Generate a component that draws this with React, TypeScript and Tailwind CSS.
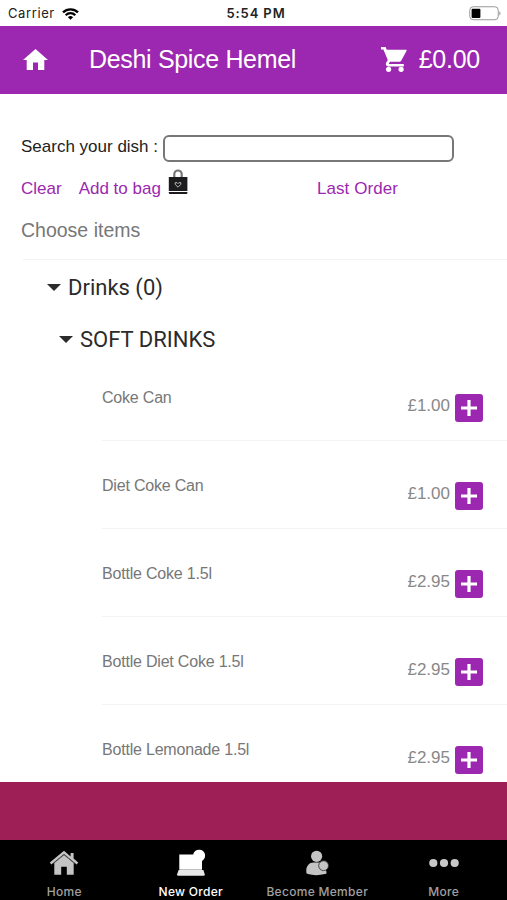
import { useState } from 'react';

const ITEMS = [
  { id: 'coke', name: 'Coke Can', price: 1 },
  { id: 'diet-coke', name: 'Diet Coke Can', price: 1 },
  { id: 'bottle-coke', name: 'Bottle Coke 1.5l', price: 2.95 },
  { id: 'bottle-diet-coke', name: 'Bottle Diet Coke 1.5l', price: 2.95 },
  { id: 'bottle-lemonade', name: 'Bottle Lemonade 1.5l', price: 2.95 },
];

function StatusBar() {
  return (
    <div className="h-[26px] shrink-0 grid grid-cols-3 items-center pl-2 pr-[6px] pt-px font-['Inter','Liberation_Sans',sans-serif] text-[13px] text-[#222]">
      <div className="flex items-center gap-[7px]">
        <span className="tracking-[0.6px]">Carrier</span>
        <svg className="w-[17px] h-3" viewBox="0 0 17 12" fill="none" stroke="#000" strokeWidth="2.3">
          <path d="M1 4.4a10.6 10.6 0 0 1 15 0" />
          <path d="M3.7 7.2a6.8 6.8 0 0 1 9.6 0" />
          <path d="M8.5 11.8 5.9 9.2a3.7 3.7 0 0 1 5.2 0z" fill="#000" stroke="none" />
        </svg>
      </div>
      <span className="ml-[3px] text-center font-semibold tracking-[0.9px] whitespace-nowrap">5:54 PM</span>
      <svg className="w-8 h-[15px] justify-self-end" viewBox="0 0 32 15">
        <rect x="0.75" y="0.75" width="28.5" height="13" rx="3.5" fill="#fff" stroke="#999" />
        <rect x="2.6" y="2.7" width="8.8" height="9.2" rx="1" fill="#000" />
        <path d="M30.3 5.2c1.6.6 1.6 3.7 0 4.3z" fill="#999" />
      </svg>
    </div>
  );
}

function HomeIcon({ className }: { className?: string }) {
  return (
    <svg className={className} viewBox="0 0 25 21" fill="#fff">
      <path d="M12.5 0 25 11h-3.7v10H15v-7.5h-5V21H3.7V11H0z" />
    </svg>
  );
}

function CartIcon({ className }: { className?: string }) {
  return (
    <svg className={className} viewBox="0 0 26 25" fill="#fff">
      <path d="M0 0h4.6l1.2 2.7H25c.6 0 .9.5.6 1l-5.3 9.7c-.5.9-1.2 1.4-2.2 1.4H9l-1.2 1.6c-.1.3 0 .5.3.5h14.7v2.5H7.2c-1.9 0-3-1.9-2.1-3.6l1.7-2.7L2.4 2.5H0z" />
      <circle cx="7.6" cy="22.3" r="2.6" />
      <circle cx="20.1" cy="22.3" r="2.6" />
    </svg>
  );
}

function Caret() {
  return (
    <svg className="w-[14px] h-[7px]" viewBox="0 0 14 7" fill="#2b2b2b">
      <path d="M0 0h14L7 7z" />
    </svg>
  );
}

function BagIcon() {
  return (
    <svg className="w-5 h-[26px]" viewBox="0 0 20 26">
      <path d="M6.3 9V5.2a3.7 3.7 0 0 1 7.4 0V9" fill="none" stroke="#777" strokeWidth="2.2" />
      <path d="M.8 8h18.6v14H.8z" fill="#1c1c1e" />
      <path d="M.8 22.9h18.6v1a1 1 0 0 1-1 1H1.8a1 1 0 0 1-1-1z" fill="#1c1c1e" />
      <path d="M10 18.2 7.2 15.4v-1.7h1.9l.9.9.9-.9h1.9v1.7z" fill="none" stroke="#bbb" strokeWidth="1" />
    </svg>
  );
}

function HomeTabIcon() {
  return (
    <svg className="w-[30px] h-[26px]" viewBox="0 0 30 26" fill="#c4c4c4">
      <path d="M5.3 13 15 5l9.7 8v11.8h-6.9v-8h-5.6v8H5.3z" />
      <path d="M15 .8 .8 12.6l1.5 1.9L15 4.1l12.7 10.4 1.5-1.9-4.6-4V3h-3v3.4z" />
      <path d="M4.5 13.4 15 4.8l10.5 8.6" fill="none" stroke="#777" strokeWidth="0.6" />
    </svg>
  );
}

function OrderTabIcon() {
  return (
    <svg className="w-[30px] h-[28px]" viewBox="0 0 30 28" fill="#fff">
      <path d="M3.3 5.5h13.9a6 6 0 1 1 8.8 6.4v8.9H3.3z" />
      <path d="M2.6 21h24.8l1.3 4.2a1.4 1.4 0 0 1-1.3 1.6H2.4a1.4 1.4 0 0 1-1.3-1.6z" fill="#e8e8e8" />
    </svg>
  );
}

function MemberTabIcon() {
  return (
    <svg className="w-[24px] h-[26px]" viewBox="0 0 24 26" fill="#c4c4c4">
      <circle cx="11.6" cy="6.3" r="5.6" />
      <path d="M1.3 20.5c0-4.6 3.2-8 7-8h6.2c2 0 3.6.6 4.8 1.8l2.3 8.2a1.6 1.6 0 0 1-1.6 1.6c-6 1.500-12 1.500-17 0a1.8 1.8 0 0 1-1.700-1.800z" />
      <circle cx="18.6" cy="15.7" r="4.9" stroke="#333" strokeWidth="0.9" />
    </svg>
  );
}

function MoreTabIcon() {
  return (
    <svg className="w-[30px] h-[10px]" viewBox="0 0 30 10" fill="#c8c8c8">
      <circle cx="4.3" cy="5" r="4.1" />
      <circle cx="15" cy="5" r="4.1" />
      <circle cx="25.7" cy="5" r="4.1" />
    </svg>
  );
}

const TABS = [
  { label: 'Home', icon: HomeTabIcon },
  { label: 'New Order', icon: OrderTabIcon },
  { label: 'Become Member', icon: MemberTabIcon },
  { label: 'More', icon: MoreTabIcon },
];

export default function App() {
  const [total, setTotal] = useState(0);
  const [query, setQuery] = useState('');
  const [tab, setTab] = useState('New Order');

  const items = ITEMS.filter((item) => item.name.toLowerCase().includes(query.toLowerCase()));

  return (
    <div className="h-[900px] flex flex-col overflow-hidden bg-white font-['Liberation_Sans',Arial,sans-serif]">
      <StatusBar />

      <header className="h-[68px] shrink-0 flex items-center bg-[#9c27b0] pl-[23px] pr-[27px] text-white">
        <HomeIcon className="-mt-[2px] w-[25px] h-[21px]" />
        <h1 className="ml-[41px] text-[25px] tracking-[-0.33px]">Deshi Spice Hemel</h1>
        <CartIcon className="ml-auto -mt-px w-[26px] h-[25px]" />
        <span className="ml-[12px] text-[25px] tracking-[-0.25px]">£{total.toFixed(2)}</span>
      </header>

      <main className="flex-1 min-h-0 overflow-hidden">
        {/* Search */}
        <div className="flex items-center pl-[21px] pt-[41px]">
          <label htmlFor="search" className="-mt-[3px] text-[17px] text-[#222]">Search your dish :</label>
          <input
            id="search"
            value={query}
            onChange={(e) => setQuery(e.target.value)}
            className="ml-[5px] w-[291px] h-[27px] rounded-[6px] border-2 border-[#777] px-2 outline-none"
          />
        </div>
        <div className="flex items-center h-[26px] mt-[7px] pl-[21px] text-[17px] text-[#9c27b0]">
          <button className="mt-[13px]" onClick={() => setQuery('')}>Clear</button>
          <button className="mt-[13px] ml-[17px]">Add to bag</button>
          <span className="ml-[7px]"><BagIcon /></span>
          <button className="mt-[13px] ml-[129px] tracking-[0.08px]">Last Order</button>
        </div>
        <p className="mt-[23px] pl-[21px] text-[19.5px] leading-6 text-[#777]">Choose items</p>

        {/* Menu */}
        <section className="mt-[17px] ml-[23px] border-t border-[#f3f3f3] font-[Roboto,sans-serif] text-[#2b2b2b]">
          <h2 className="flex items-center gap-[7px] h-[55px] pl-6 text-[22px]">
            <Caret />
            Drinks (0)
          </h2>
          <h3 className="flex items-center gap-[7px] h-[48px] pl-9 text-[22px]">
            <Caret />
            SOFT DRINKS
          </h3>
        </section>
        <ul className="-mt-[10px] pl-[102px] text-[16px] text-[#777]">
          {items.map((item) => (
            <li key={item.id} className="flex h-[88px] pr-6 border-b border-[#f3f3f3]">
              <span className="mt-[35px] leading-5 tracking-[-0.2px]">{item.name}</span>
              <span className="ml-auto mt-[43px] text-[17px] leading-5 text-[#888]">£{item.price.toFixed(2)}</span>
              <button
                aria-label="Add"
                className="ml-[5px] mt-[41px] flex items-center justify-center size-7 rounded-[3px] bg-[#9c27b0]"
                onClick={() => setTotal(total + item.price)}
              >
                <svg className="size-4" viewBox="0 0 16 16" fill="#fff">
                  <path d="M6.4 0h3.2v6.4H16v3.2H9.6V16H6.4V9.6H0V6.4h6.4z" />
                </svg>
              </button>
            </li>
          ))}
        </ul>
      </main>

      <div className="h-[58px] shrink-0 bg-[#9e1f55]" />

      <nav className="h-[60px] shrink-0 grid grid-cols-4 bg-black pl-px font-['Inter','Liberation_Sans',sans-serif] text-[12px] font-medium">
        {TABS.map(({ label, icon: Icon }) => (
          <button
            key={label}
            className={`flex flex-col items-center whitespace-nowrap ${tab === label ? 'text-white' : 'text-[#a0a0a0]'}`}
            onClick={() => setTab(label)}
          >
            <span className="flex h-[46px] items-center">
              <Icon />
            </span>
            <span className="leading-3 tracking-[0.3px]">{label}</span>
          </button>
        ))}
      </nav>
    </div>
  );
}
